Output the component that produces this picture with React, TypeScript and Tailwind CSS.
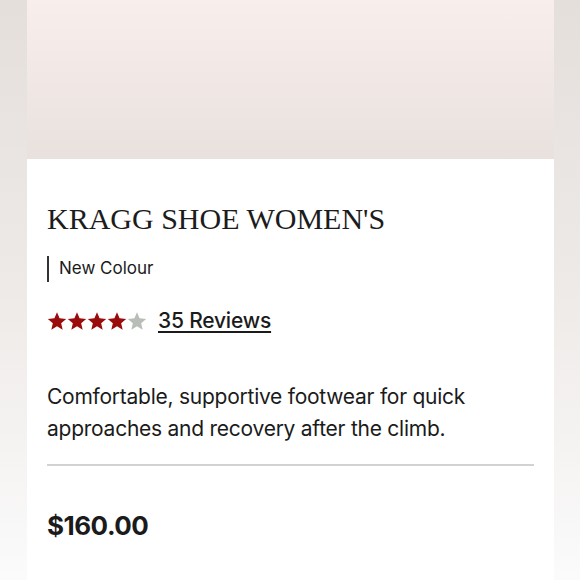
import React from "react";

const Star = ({ filled }: { filled: boolean }) => (
  <svg width="20" height="20" viewBox="0 0 24 24" className={filled ? "fill-[#9a0b0b]" : "fill-[#b9bdb7]"}>
    <path d="M12 1.5l3.09 7.26 7.91.7-6 5.2 1.8 7.74L12 18.3l-6.8 4.1 1.8-7.74-6-5.2 7.91-.7z" />
  </svg>
);

export default function App() {
  return (
    <div className="flex h-[580px] w-[580px] flex-col bg-gradient-to-b from-[#e4dfdb] via-[#eeeae8] to-[#fbfbfb] pl-[27px] pr-[26px]">
      <div className="h-[159px] shrink-0 bg-gradient-to-b from-[#f8efec] to-[#e9e1de]" />
      <div className="flex-1 bg-white px-[20px] pt-[43px] font-['Inter',sans-serif] text-[#1b1b1b]">
        <h1 className="font-['Liberation_Serif',serif] text-[30px] leading-[34px] text-[#1c1c1c]">
          KRAGG SHOE WOMEN'S
        </h1>
        <div className="mt-[20px] flex h-[26px] items-center border-l-2 border-[#333] pl-[10px] text-[17px]">
          New Colour
        </div>
        <div className="mt-[23px] flex items-center gap-[11px]">
          <div className="flex">
            <Star filled />
            <Star filled />
            <Star filled />
            <Star filled />
            <Star filled={false} />
          </div>
          <a className="text-[21px] font-medium tracking-[-0.2px] underline underline-offset-[3px]">35 Reviews</a>
        </div>
        <p className="mt-[44px] text-[21px] leading-[32px] tracking-[-0.25px]">
          Comfortable, supportive footwear for quick approaches and recovery after the climb.
        </p>
        <div className="mt-[19px] h-[2px] bg-[#d2d2d2]" />
        <div className="mt-[40px] text-[26px] font-bold tracking-[-0.5px]">$160.00</div>
      </div>
    </div>
  );
}
